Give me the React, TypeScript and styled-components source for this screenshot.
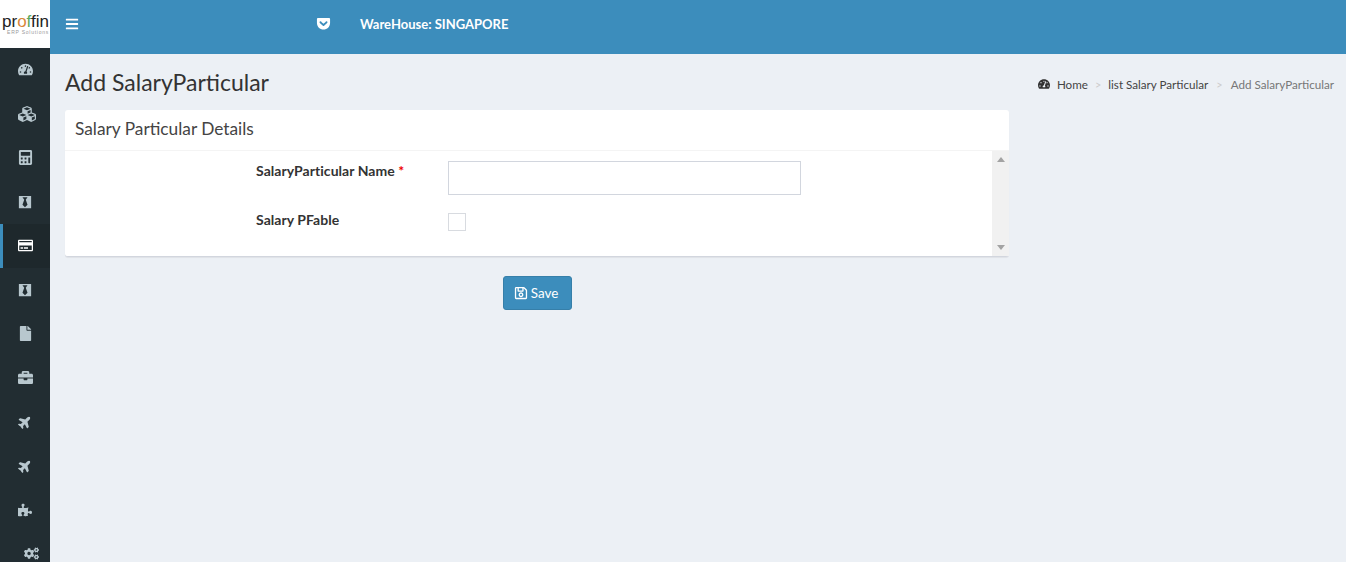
import React from "react";
import styled, { createGlobalStyle } from "styled-components";
import {
  FaBars, FaBlackTie, FaBriefcase, FaCalculator, FaCogs, FaCubes, FaFile, FaGetPocket,
  FaPlane, FaPuzzlePiece, FaRegCreditCard, FaRegSave, FaTachometerAlt,
} from "react-icons/fa";

const FONT = `"Lato", "Open Sans", "Liberation Sans", sans-serif`;

const Global = createGlobalStyle`
  html, body { margin: 0; padding: 0; height: 100%; overflow: hidden; }
  body { font-family: ${FONT}; background: #ecf0f5; color: #333; }
  * { box-sizing: border-box; }
`;

const Page = styled.div`display: flex; width: 1346px; height: 562px; overflow: hidden;`;
const Sidebar = styled.aside`width: 50px; flex: none; background: #222d32; overflow: hidden;`;
const Logo = styled.div`
  height: 48px; background: #fff; display: flex; flex-direction: column; align-items: flex-end;
  justify-content: center; color: #222; padding: 2px 1px 0 0;
`;
const LogoWord = styled.div`font: 400 17px/14px "Liberation Sans", sans-serif; white-space: nowrap;`;
const LogoO = styled.span`color: #d9873a;`;
const LogoF = styled.span`color: #5aa860;`;
const LogoSub = styled.div`font: 400 5px/6px "Liberation Sans", sans-serif; letter-spacing: .75px; color: #999; white-space: nowrap;`;
const Menu = styled.nav`display: flex; flex-direction: column;`;
const MenuItem = styled.div<{ $active?: boolean; $shift?: number; $size: number }>`
  height: 44px; flex: none; display: flex; align-items: center; padding-left: ${p => 15 + (p.$shift ?? 0)}px;
  background: ${p => (p.$active ? "#1e282c" : "transparent")};
  border-left: 3px solid ${p => (p.$active ? "#3c8dbc" : "transparent")};
  color: ${p => (p.$active ? "#fff" : "#b8c7ce")};
  & > svg { font-size: ${p => p.$size}px; margin-top: -1px; }
`;
const PlaneIcon = styled(FaPlane)`transform: rotate(-45deg);`;
const Main = styled.div`flex: 1; min-width: 0; display: flex; flex-direction: column;`;
const TopBar = styled.header`height: 54px; background: #3c8dbc; display: flex; align-items: center; color: #fff; flex: none; padding-bottom: 7px;`;
const Burger = styled.div`width: 266px; padding-left: 15px; display: flex; font-size: 14px;`;
const Pocket = styled.div`width: 44px; display: flex; font-size: 15px;`;
const Warehouse = styled.div`font-size: 13px; font-weight: 700; white-space: nowrap;`;
const Content = styled.main`flex: 1; padding: 0 12px 0 15px;`;
const Heading = styled.div`height: 56px; display: flex; justify-content: space-between; align-items: center;`;
const Title = styled.h1`margin: 0; font-size: 23px; font-weight: 400; color: #333;`;
const Crumbs = styled.ol`display: flex; align-items: center; margin: 4px 0 0; padding: 0; list-style: none; font-size: 11.65px; color: #444;`;
const Crumb = styled.li<{ $muted?: boolean }>`display: flex; align-items: center; white-space: nowrap; color: ${p => (p.$muted ? "#777" : "#444")};`;
const CrumbIcon = styled(FaTachometerAlt)`margin-right: 7px; font-size: 12px; color: #333;`;
const Sep = styled.li<{ $pad: number }>`color: #ccc; padding: 0 ${p => p.$pad}px; font-size: 11px;`;
const Card = styled.section`width: 944px; background: #fff; border-radius: 3px; border-bottom: 1px solid #d2d6de; box-shadow: 0 1px 1px rgba(0,0,0,.06);`;
const CardHead = styled.div`height: 41px; padding: 0 10px 3px; display: flex; align-items: center; border-bottom: 1px solid #f4f4f4;`;
const CardTitle = styled.h3`margin: 0; font-size: 17.3px; font-weight: 400; color: #444;`;
const CardBody = styled.div`display: flex; height: 105px;`;
const Form = styled.div`flex: 1; padding: 10px 0 0 191px;`;
const Row = styled.div<{ $h: number }>`display: flex; height: ${p => p.$h}px;`;
const Label = styled.label`width: 192px; flex: none; font-size: 14px; font-weight: 700; color: #333; white-space: nowrap; line-height: 20px; letter-spacing: .05px;`;
const Star = styled.span`color: #e00;`;
const TextInput = styled.input`width: 353px; height: 34px; border: 1px solid #d2d6de; background: #fff; outline: none;`;
const Check = styled.div`width: 18px; height: 18px; border: 1px solid #d8dbe0; margin-top: 3px; background: #fff;`;
const Track = styled.div`width: 17px; flex: none; background: #f1f1f1; display: flex; flex-direction: column; justify-content: space-between; align-items: center; padding: 6px 0 6px;`;
const Arrow = styled.svg`width: 8px; height: 5px; fill: #a3a3a3; display: block;`;
const SaveRow = styled.div`width: 944px; display: flex; justify-content: center; padding: 19px 0 0;`;
const SaveBtn = styled.button`
  width: 69px; height: 34px; background: #3c8dbc; border: 1px solid #367fa9; border-radius: 3px; color: #fff;
  font: 400 13.4px ${FONT}; display: flex; align-items: center; justify-content: center; gap: 3px; padding: 0 2px 1px 0;
  & > svg { font-size: 14px; }
`;

const icons = [
  { Icon: FaTachometerAlt, size: 15 },
  { Icon: FaCubes, size: 18 },
  { Icon: FaCalculator, size: 15 },
  { Icon: FaBlackTie, size: 14 },
  { Icon: FaRegCreditCard, size: 15 },
  { Icon: FaBlackTie, size: 14 },
  { Icon: FaFile, size: 15 },
  { Icon: FaBriefcase, size: 15 },
  { Icon: PlaneIcon, size: 14 },
  { Icon: PlaneIcon, size: 14 },
  { Icon: FaPuzzlePiece, size: 14 },
  { Icon: FaCogs, size: 15, shift: 6 },
];

export default function App() {
  return (
    <Page>
      <Global />
      <Sidebar>
        <Logo>
          <LogoWord>pr<LogoO>o</LogoO><LogoF>f</LogoF>fin</LogoWord>
          <LogoSub>ERP Solutions</LogoSub>
        </Logo>
        <Menu>
          {icons.map(({ Icon, size, shift }, i) => (
            <MenuItem key={i} $active={i === 4} $shift={shift} $size={size}><Icon /></MenuItem>
          ))}
        </Menu>
      </Sidebar>
      <Main>
        <TopBar>
          <Burger><FaBars /></Burger>
          <Pocket><FaGetPocket /></Pocket>
          <Warehouse>WareHouse: SINGAPORE</Warehouse>
        </TopBar>
        <Content>
          <Heading>
            <Title>Add SalaryParticular</Title>
            <Crumbs>
              <Crumb><CrumbIcon />Home</Crumb>
              <Sep $pad={7}>&gt;</Sep>
              <Crumb>list Salary Particular</Crumb>
              <Sep $pad={8}>&gt;</Sep>
              <Crumb $muted>Add SalaryParticular</Crumb>
            </Crumbs>
          </Heading>
          <Card>
            <CardHead><CardTitle>Salary Particular Details</CardTitle></CardHead>
            <CardBody>
              <Form>
                <Row $h={49}>
                  <Label>SalaryParticular Name <Star>*</Star></Label>
                  <TextInput />
                </Row>
                <Row $h={40}>
                  <Label>Salary PFable</Label>
                  <Check />
                </Row>
              </Form>
              <Track>
                <Arrow viewBox="0 0 8 5"><polygon points="4,0 8,5 0,5" /></Arrow>
                <Arrow viewBox="0 0 8 5"><polygon points="0,0 8,0 4,5" /></Arrow>
              </Track>
            </CardBody>
          </Card>
          <SaveRow><SaveBtn><FaRegSave />Save</SaveBtn></SaveRow>
        </Content>
      </Main>
    </Page>
  );
}
